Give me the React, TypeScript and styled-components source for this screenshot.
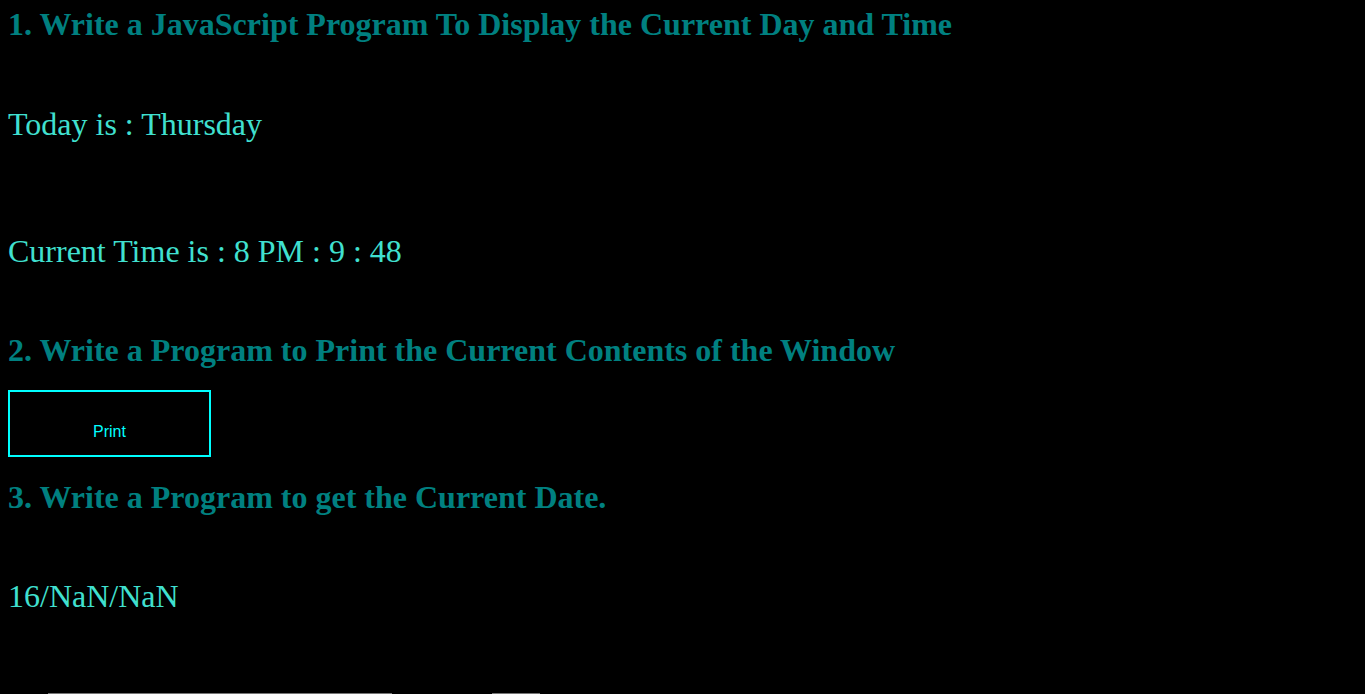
import React from 'react'
import styled, { createGlobalStyle } from 'styled-components'

const GlobalStyle = createGlobalStyle`
  html, body {
    margin: 0;
    padding: 0;
    background: #000;
    overflow: hidden;
  }
  body {
    font-family: "Liberation Serif", "Times New Roman", serif;
  }
`

const Page = styled.div`
  display: flex;
  flex-direction: column;
  align-items: flex-start;
  padding: 6px 8px 0;
  min-height: 694px;
  box-sizing: border-box;
`

const Heading = styled.h2<{ $gap?: number }>`
  margin: ${(p) => p.$gap ?? 0}px 0 0;
  font: 700 32px/37px "Liberation Serif", "Times New Roman", serif;
  color: #008080;
`

const Output = styled.p<{ $gap: number }>`
  margin: ${(p) => p.$gap}px 0 0;
  font: 400 32px/37px "Liberation Serif", "Times New Roman", serif;
  color: #40e0d0;
`

const PrintButton = styled.button`
  margin-top: 21px;
  width: 203px;
  height: 67px;
  box-sizing: border-box;
  padding: 16px 0 0;
  display: flex;
  align-items: center;
  justify-content: center;
  background: #000;
  border: 2px solid #00ffff;
  color: #00ffff;
  font: 400 16px/18px "Liberation Sans", Arial, sans-serif;
  cursor: pointer;
`

const FormRow = styled.div`
  display: flex;
  gap: 100px;
  margin-top: 78px;
  padding-left: 40px;
`

const Field = styled.input`
  width: 344px;
  height: 30px;
  box-sizing: border-box;
  background: #000;
  border: 1px solid #767676;
`

const Submit = styled.button`
  width: 48px;
  height: 30px;
  box-sizing: border-box;
  background: #000;
  border: 1px solid #767676;
`

export default function App() {
  return (
    <>
      <GlobalStyle />
      <Page>
        <Heading>1. Write a JavaScript Program To Display the Current Day and Time</Heading>
        <Output $gap={63}>Today is : Thursday</Output>
        <Output $gap={90}>Current Time is : 8 PM : 9 : 48</Output>
        <Heading $gap={62}>2. Write a Program to Print the Current Contents of the Window</Heading>
        <PrintButton onClick={() => window.print()}>Print</PrintButton>
        <Heading $gap={22}>3. Write a Program to get the Current Date.</Heading>
        <Output $gap={62}>16/NaN/NaN</Output>
        <FormRow>
          <Field type="text" />
          <Submit />
        </FormRow>
      </Page>
    </>
  )
}
